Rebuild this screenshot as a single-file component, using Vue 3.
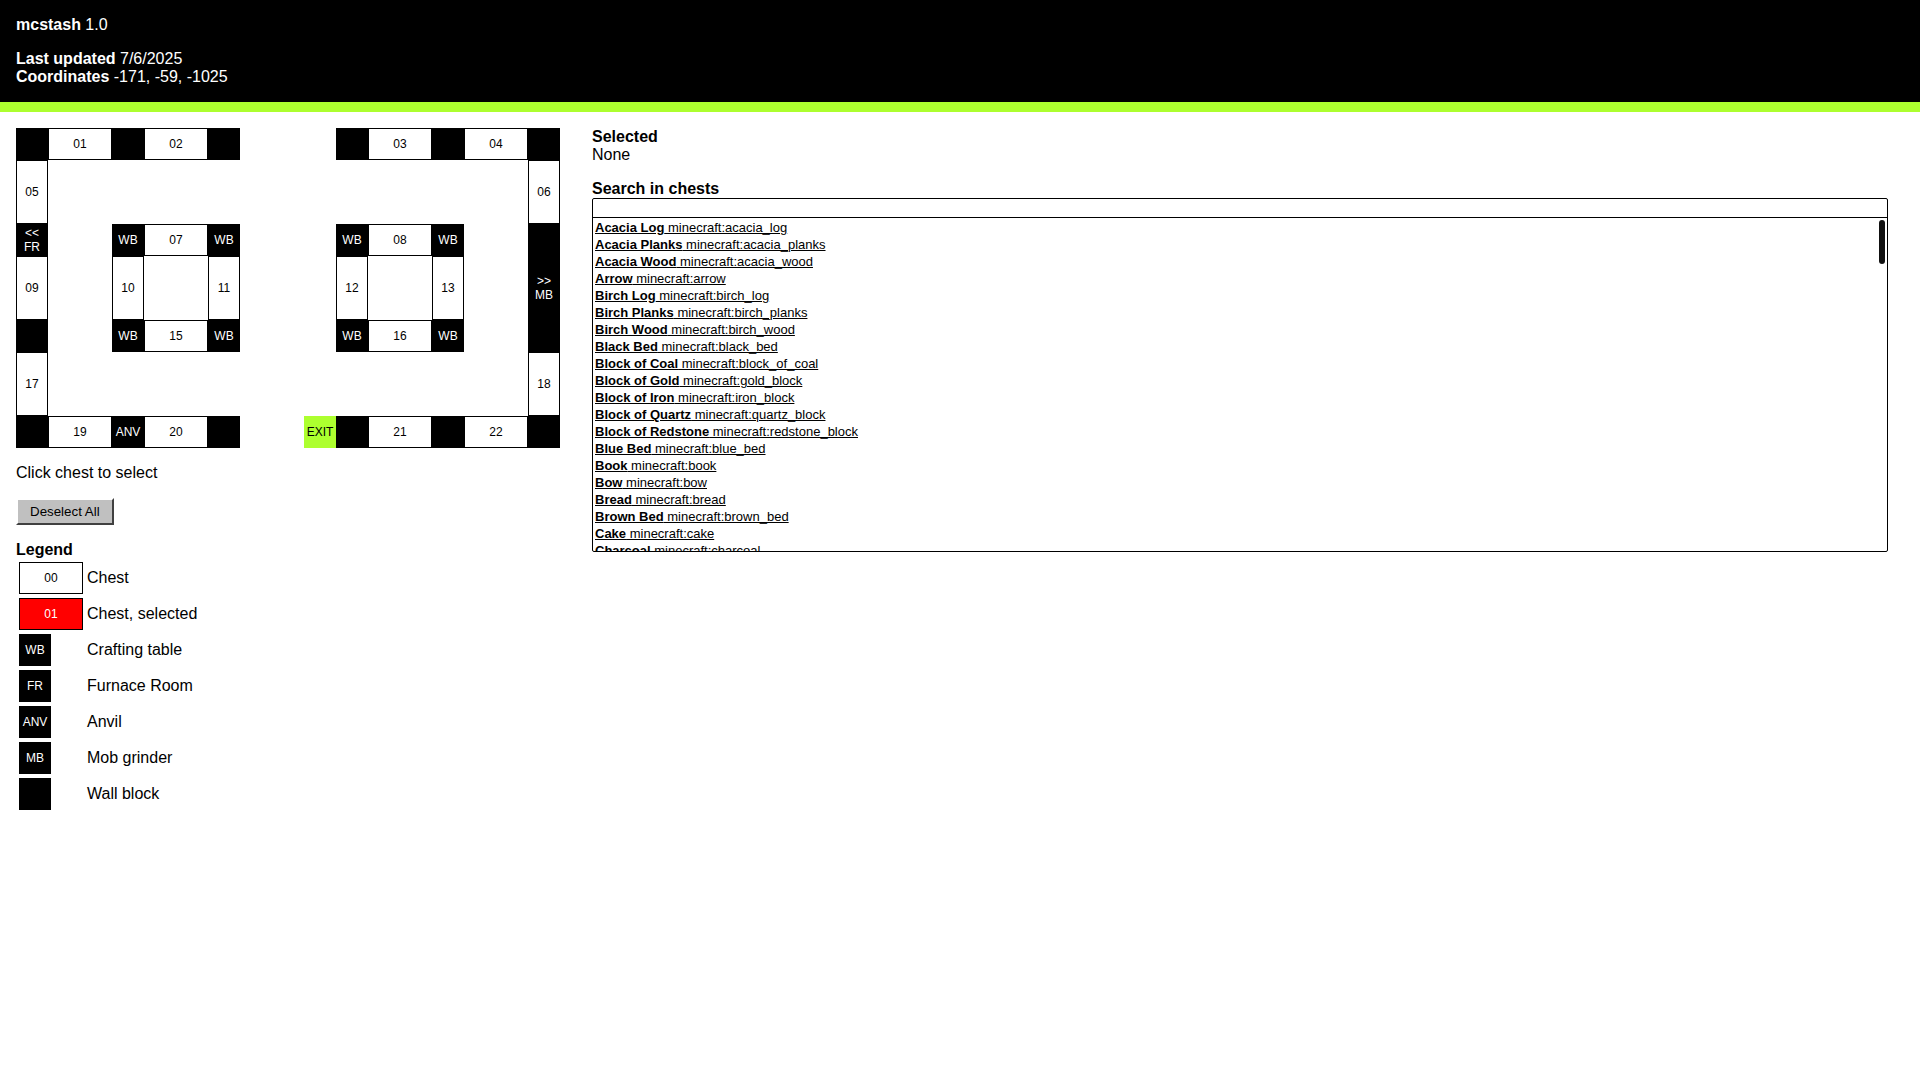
<script setup>
import { ref, computed } from 'vue'

const cells = [
  { type: 'wall', x: 1, y: 1 },
  { type: 'chest', x: 2, y: 1, w: 2, label: '01' },
  { type: 'wall', x: 4, y: 1 },
  { type: 'chest', x: 5, y: 1, w: 2, label: '02' },
  { type: 'wall', x: 7, y: 1 },
  { type: 'wall', x: 11, y: 1 },
  { type: 'chest', x: 12, y: 1, w: 2, label: '03' },
  { type: 'wall', x: 14, y: 1 },
  { type: 'chest', x: 15, y: 1, w: 2, label: '04' },
  { type: 'wall', x: 17, y: 1 },
  { type: 'chest', x: 1, y: 2, h: 2, label: '05' },
  { type: 'chest', x: 17, y: 2, h: 2, label: '06' },
  { type: 'wall', x: 1, y: 4, label: '<< FR' },
  { type: 'wall', x: 4, y: 4, label: 'WB' },
  { type: 'chest', x: 5, y: 4, w: 2, label: '07' },
  { type: 'wall', x: 7, y: 4, label: 'WB' },
  { type: 'wall', x: 11, y: 4, label: 'WB' },
  { type: 'chest', x: 12, y: 4, w: 2, label: '08' },
  { type: 'wall', x: 14, y: 4, label: 'WB' },
  { type: 'wall', x: 17, y: 4, h: 4, label: '>> MB' },
  { type: 'chest', x: 1, y: 5, h: 2, label: '09' },
  { type: 'chest', x: 4, y: 5, h: 2, label: '10' },
  { type: 'chest', x: 7, y: 5, h: 2, label: '11' },
  { type: 'chest', x: 11, y: 5, h: 2, label: '12' },
  { type: 'chest', x: 14, y: 5, h: 2, label: '13' },
  { type: 'wall', x: 1, y: 7 },
  { type: 'wall', x: 4, y: 7, label: 'WB' },
  { type: 'chest', x: 5, y: 7, w: 2, label: '15' },
  { type: 'wall', x: 7, y: 7, label: 'WB' },
  { type: 'wall', x: 11, y: 7, label: 'WB' },
  { type: 'chest', x: 12, y: 7, w: 2, label: '16' },
  { type: 'wall', x: 14, y: 7, label: 'WB' },
  { type: 'chest', x: 1, y: 8, h: 2, label: '17' },
  { type: 'chest', x: 17, y: 8, h: 2, label: '18' },
  { type: 'wall', x: 1, y: 10 },
  { type: 'chest', x: 2, y: 10, w: 2, label: '19' },
  { type: 'wall', x: 4, y: 10, label: 'ANV' },
  { type: 'chest', x: 5, y: 10, w: 2, label: '20' },
  { type: 'wall', x: 7, y: 10 },
  { type: 'exit', x: 10, y: 10, label: 'EXIT' },
  { type: 'wall', x: 11, y: 10 },
  { type: 'chest', x: 12, y: 10, w: 2, label: '21' },
  { type: 'wall', x: 14, y: 10 },
  { type: 'chest', x: 15, y: 10, w: 2, label: '22' },
  { type: 'wall', x: 17, y: 10 }
]

const legend = [
  { kind: 'chest wide', label: '00', text: 'Chest' },
  { kind: 'chest wide selected', label: '01', text: 'Chest, selected' },
  { kind: 'wall', label: 'WB', text: 'Crafting table' },
  { kind: 'wall', label: 'FR', text: 'Furnace Room' },
  { kind: 'wall', label: 'ANV', text: 'Anvil' },
  { kind: 'wall', label: 'MB', text: 'Mob grinder' },
  { kind: 'wall', label: '', text: 'Wall block' }
]

const items = [
  ['Acacia Log', 'acacia_log'],
  ['Acacia Planks', 'acacia_planks'],
  ['Acacia Wood', 'acacia_wood'],
  ['Arrow', 'arrow'],
  ['Birch Log', 'birch_log'],
  ['Birch Planks', 'birch_planks'],
  ['Birch Wood', 'birch_wood'],
  ['Black Bed', 'black_bed'],
  ['Block of Coal', 'block_of_coal'],
  ['Block of Gold', 'gold_block'],
  ['Block of Iron', 'iron_block'],
  ['Block of Quartz', 'quartz_block'],
  ['Block of Redstone', 'redstone_block'],
  ['Blue Bed', 'blue_bed'],
  ['Book', 'book'],
  ['Bow', 'bow'],
  ['Bread', 'bread'],
  ['Brown Bed', 'brown_bed'],
  ['Cake', 'cake'],
  ['Charcoal', 'charcoal']
]

const selected = ref([])
const query = ref('')

const found = computed(() => {
  const q = query.value.toLowerCase()
  return items.filter(([name, id]) => name.toLowerCase().includes(q) || id.includes(q))
})

function toggle(label) {
  selected.value = selected.value.includes(label)
    ? selected.value.filter((l) => l !== label)
    : [...selected.value, label]
}

function place(c) {
  return {
    gridColumn: `${c.x} / span ${c.w || 1}`,
    gridRow: `${c.y} / span ${c.h || 1}`
  }
}
</script>

<template>
  <header class="top">
    <p><b>mcstash</b> 1.0</p>
    <p>
      <b>Last updated</b> 7/6/2025<br />
      <b>Coordinates</b> -171, -59, -1025
    </p>
  </header>
  <main class="content">
    <section class="left">
      <div class="map">
        <component
          :is="c.type === 'chest' ? 'button' : 'div'"
          v-for="c in cells"
          :key="`${c.x}-${c.y}`"
          class="cell"
          :class="[c.type, { selected: c.type === 'chest' && selected.includes(c.label) }]"
          :style="place(c)"
          @click="c.type === 'chest' && toggle(c.label)"
        >{{ c.label }}</component>
      </div>
      <p>Click chest to select</p>
      <button class="deselect" type="button" @click="selected = []">Deselect All</button>
      <div>
        <b>Legend</b>
        <table class="legend">
          <tbody>
            <tr v-for="l in legend" :key="l.text">
              <td><div class="cell" :class="l.kind">{{ l.label }}</div></td>
              <td>{{ l.text }}</td>
            </tr>
          </tbody>
        </table>
      </div>
    </section>
    <section class="right">
      <p>
        <b>Selected</b><br />
        {{ selected.length ? selected.join(', ') : 'None' }}
      </p>
      <div>
        <label for="search"><b>Search in chests</b></label>
        <div class="search">
          <input id="search" v-model="query" type="text" autocomplete="off" />
          <div class="results">
            <ul>
              <li v-for="[name, id] in found" :key="id">
                <a href="#"><b>{{ name }}</b> minecraft:{{ id }}</a>
              </li>
            </ul>
            <span class="thumb"></span>
          </div>
        </div>
      </div>
    </section>
  </main>
</template>

<style>
body {
  margin: 0;
  background: #fff;
  color: #000;
  font: 16px/18px "Liberation Sans", Arial, sans-serif;
}
</style>

<style scoped>
p {
  margin: 0;
}

.top {
  display: flex;
  flex-direction: column;
  gap: 16px;
  padding: 16px;
  background: #000;
  color: #fff;
  border-bottom: 10px solid greenyellow;
}

.content {
  display: flex;
  align-items: flex-start;
  gap: 32px;
  padding: 16px 32px 16px 16px;
}

.left,
.right {
  display: flex;
  flex-direction: column;
  align-items: flex-start;
  gap: 16px;
}

.right {
  flex: 1;
  min-width: 0;
  align-items: stretch;
}

.map {
  display: grid;
  grid-template-columns: repeat(17, 32px);
  grid-template-rows: repeat(10, 32px);
}

.cell {
  display: flex;
  align-items: center;
  justify-content: center;
  box-sizing: border-box;
  min-width: 32px;
  min-height: 32px;
  margin: 0;
  padding: 0;
  border: 1px solid #000;
  border-radius: 0;
  font: 12px/14px "Liberation Sans", Arial, sans-serif;
  text-align: center;
}

.chest {
  background: #fff;
  color: #000;
}

.wall {
  background: #000;
  color: #fff;
}

.exit {
  background: greenyellow;
  border-color: greenyellow;
}

.selected {
  background: #f00;
  color: #fff;
}

.deselect {
  height: 27px;
  padding: 0 12px;
  border: 2px solid;
  border-color: #fff #404040 #404040 #fff;
  background: #c0c0c0;
  color: #000;
  font-family: "Liberation Sans", Arial, sans-serif;
}

.legend {
  border-spacing: 2px;
}

.legend td {
  padding: 1px;
}

.legend .cell {
  width: 32px;
}

.legend .wide {
  width: 64px;
}

.search {
  display: flex;
  flex-direction: column;
  border: 1px solid #000;
  border-radius: 2px;
}

.search input {
  box-sizing: border-box;
  height: 19px;
  margin: 0;
  padding: 1px 2px;
  border: 0;
  border-bottom: 1px solid #000;
  background: transparent;
  outline: none;
  font-family: "Liberation Sans", Arial, sans-serif;
}

.results {
  position: relative;
}

.results ul {
  height: 333px;
  margin: 0;
  padding: 1px 2px 0;
  box-sizing: border-box;
  overflow-y: auto;
  scrollbar-width: none;
  list-style: none;
  font-size: 13px;
  line-height: 17px;
}

.results a {
  color: #000;
}

.thumb {
  position: absolute;
  top: 2px;
  right: 2px;
  width: 6px;
  height: 44px;
  border-radius: 3px;
  background: #111;
}
</style>
